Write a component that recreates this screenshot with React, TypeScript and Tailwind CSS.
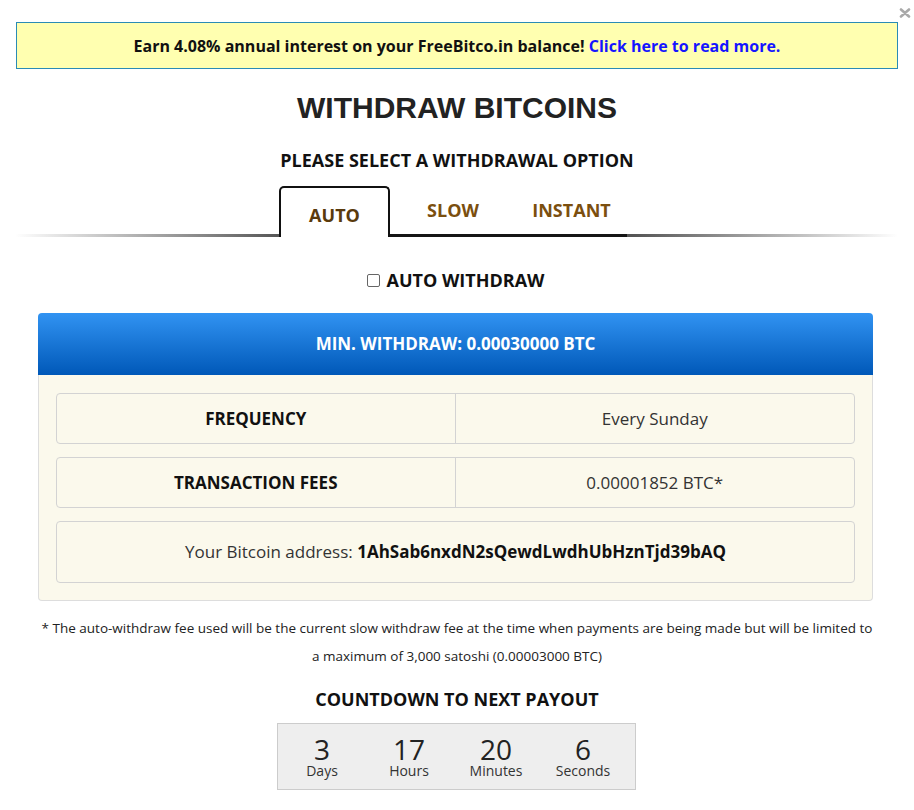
import React from "react";

const os = { fontFamily: '"Open Sans", "DejaVu Sans", sans-serif' };

function Row({ label, value }: { label: string; value: string }) {
  return (
    <div className="flex h-[51px] rounded-[4px] border border-[#d3d3d3] bg-[#fbf9ec]">
      <div className="flex w-1/2 items-center justify-center border-r border-[#d3d3d3] text-[17px] font-bold text-[#111]">
        {label}
      </div>
      <div className="flex w-1/2 items-center justify-center text-[17px] text-[#333]">{value}</div>
    </div>
  );
}

function Unit({ n, l }: { n: string; l: string }) {
  return (
    <div className="flex w-[87px] flex-col items-center">
      <span className="text-[28px] leading-[27px] text-[#222]">{n}</span>
      <span className="text-[14px] leading-[15px] text-[#333]">{l}</span>
    </div>
  );
}

export default function App() {
  return (
    <div className="relative min-h-[810px] w-[914px] bg-white" style={os}>
      <svg className="absolute left-[899px] top-[8px]" width="12" height="10" viewBox="0 0 12 10">
        <path d="M2 1.5 L10 8.5 M10 1.5 L2 8.5" stroke="#a9a9a9" strokeWidth="2.6" strokeLinecap="round" />
      </svg>
      <div className="px-4 pt-[22px]">
        <div className="flex h-[47px] items-center justify-center border border-[#2a8bb5] bg-[#ffffb0] text-[16px] font-bold text-[#111]">
          <span>
            Earn 4.08% annual interest on your FreeBitco.in balance!{" "}
            <span className="text-[#1515ff]">Click here to read more.</span>
          </span>
        </div>
      </div>

      <h1
        className="mt-[21px] text-center text-[30px] font-bold leading-[36px] text-[#222]"
        style={{ fontFamily: '"Liberation Sans", Arial, sans-serif' }}
      >
        WITHDRAW BITCOINS
      </h1>

      <div className="mt-[22px] text-center text-[18px] font-bold leading-[24px] text-[#111]">
        PLEASE SELECT A WITHDRAWAL OPTION
      </div>

      <div className="relative mt-[14px] h-[51px]">
        <div className="absolute bottom-[0px] left-[15px] right-[16px] h-[3px] bg-[linear-gradient(to_right,#ffffff,#555555_30%,#555555_70%,#ffffff)]" />
        <div className="relative ml-[279px] flex h-full items-end">
          <div className="flex h-[51px] w-[111px] items-center justify-center rounded-t-[5px] border-2 border-b-0 border-[#111] bg-white pt-[5px] text-[18px] font-bold text-[#5a3a0c]">
            AUTO
          </div>
          <div className="flex h-[49px] w-[122px] items-center justify-center border-b-[3px] border-[#151515] bg-white pb-[2px] pl-[4px] text-[18px] font-bold text-[#7b4f0f]">
            SLOW
          </div>
          <div className="flex h-[49px] w-[115px] items-center justify-center border-b-[3px] border-[#151515] bg-white pb-[2px] pl-[4px] text-[18px] font-bold text-[#7b4f0f]">
            INSTANT
          </div>
        </div>
      </div>

      <div className="mt-[31px] flex items-center justify-center gap-[6px] pr-[2px]">
        <span className="inline-block h-[13px] w-[13px] rounded-[2px] border border-[#666] bg-white" />
        <span className="text-[18px] font-bold leading-[24px] text-[#111]">AUTO WITHDRAW</span>
      </div>

      <div className="mx-[38px] mt-[21px] w-[835px]">
        <div className="flex h-[62px] items-center justify-center rounded-t-[4px] bg-[linear-gradient(to_bottom,#3193f2,#0058b8)] text-[17px] font-bold text-white">
          MIN. WITHDRAW: 0.00030000 BTC
        </div>
        <div className="flex flex-col gap-[13px] rounded-b-[4px] border border-t-0 border-[#ddd] bg-[#fbf9ec] px-[17px] pb-[17px] pt-[18px]">
          <Row label="FREQUENCY" value="Every Sunday" />
          <Row label="TRANSACTION FEES" value="0.00001852 BTC*" />
          <div className="flex h-[62px] items-center justify-center rounded-[4px] border border-[#d3d3d3] text-[17px] text-[#333]">
            <span>
              Your Bitcoin address: <b className="text-[#111]">1AhSab6nxdN2sQewdLwdhUbHznTjd39bAQ</b>
            </span>
          </div>
        </div>
      </div>

      <div className="mx-[34px] mt-[13px] text-center text-[13.5px] leading-[28px] text-[#222]">
        * The auto-withdraw fee used will be the current slow withdraw fee at the time when payments are being made but will be limited to
        <br />a maximum of 3,000 satoshi (0.00003000 BTC)
      </div>

      <div className="mt-[17px] text-center text-[18px] font-bold leading-[24px] text-[#111]">
        COUNTDOWN TO NEXT PAYOUT
      </div>

      <div className="mt-[12px] flex justify-center pr-[2px]">
        <div className="flex h-[67px] w-[359px] items-center justify-center border border-[#ccc] bg-[#eeeeee] pr-[7px]">
          <Unit n="3" l="Days" />
          <Unit n="17" l="Hours" />
          <Unit n="20" l="Minutes" />
          <Unit n="6" l="Seconds" />
        </div>
      </div>
    </div>
  );
}
